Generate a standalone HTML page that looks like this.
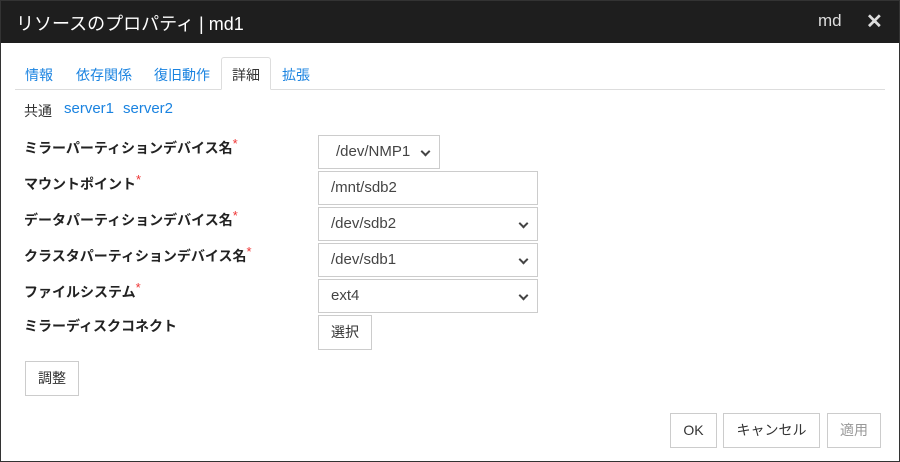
<!DOCTYPE html><html><head><meta charset="utf-8"><style>
*{box-sizing:border-box;margin:0;padding:0}
body{width:900px;height:462px;background:#fff;font-family:"Liberation Sans","Noto Sans CJK JP",sans-serif;font-size:14px;color:#333;position:relative;overflow:hidden}
.frame{position:absolute;inset:0;border:1px solid #333}
.title{position:absolute;left:0;top:0;width:900px;height:43px;background:#1e1e1e;color:#fff;font-size:18px}
.title .t{position:absolute;left:16px;top:10px}
.title .md{position:absolute;left:818px;top:11px;font-size:17px;color:#ddd}
.title .x{position:absolute;left:866px;top:9px;font-size:20px;font-weight:bold;color:#ddd}
.a{position:absolute;white-space:nowrap}
.tab{color:#1a83e0;top:65px}
.tabline{position:absolute;left:15px;top:89px;width:870px;height:1px;background:#ddd}
.act{position:absolute;left:221px;top:57px;width:50px;height:33px;border:1px solid #ddd;border-bottom:1px solid #fff;border-radius:3px 3px 0 0;background:#fff}
.lbl{left:24px;font-weight:bold;color:#222}
.lbl i{color:#e33;font-style:normal;font-size:13px;vertical-align:5px;font-weight:normal}
.box{position:absolute;border:1px solid #ccc;background:#fff;color:#444;padding-left:12px;line-height:31px;font-size:15px}
.box.s:after{content:"";position:absolute;right:10px;top:12px;width:5px;height:5px;border-right:2px solid #444;border-bottom:2px solid #444;transform:rotate(45deg)}
.btn{position:absolute;border:1px solid #ccc;background:#fff;text-align:center;line-height:32px;color:#333}
</style></head><body>
<div class="title"><span class="t">リソースのプロパティ | md1</span><span class="md">md</span><span class="x">✕</span></div>
<div class="tabline"></div><div class="act"></div>
<span class="a tab" style="left:25px">情報</span>
<span class="a tab" style="left:76px">依存関係</span>
<span class="a tab" style="left:154px">復旧動作</span>
<span class="a tab" style="left:232px;color:#333">詳細</span>
<span class="a tab" style="left:282px">拡張</span>
<span class="a" style="left:24px;top:101px">共通</span>
<span class="a" style="left:64px;top:100px;color:#1a83e0;font-size:15px">server1</span>
<span class="a" style="left:123px;top:100px;color:#1a83e0;font-size:15px">server2</span>
<span class="a lbl" style="top:136px">ミラーパーティションデバイス名<i>*</i></span>
<span class="a lbl" style="top:172px">マウントポイント<i>*</i></span>
<span class="a lbl" style="top:208px">データパーティションデバイス名<i>*</i></span>
<span class="a lbl" style="top:244px">クラスタパーティションデバイス名<i>*</i></span>
<span class="a lbl" style="top:280px">ファイルシステム<i>*</i></span>
<span class="a lbl" style="top:316px">ミラーディスクコネクト</span>
<div class="box s" style="left:318px;top:135px;width:122px;height:34px;padding-left:17px">/dev/NMP1</div>
<div class="box" style="left:318px;top:171px;width:220px;height:34px">/mnt/sdb2</div>
<div class="box s" style="left:318px;top:207px;width:220px;height:34px">/dev/sdb2</div>
<div class="box s" style="left:318px;top:243px;width:220px;height:34px">/dev/sdb1</div>
<div class="box s" style="left:318px;top:279px;width:220px;height:34px">ext4</div>
<div class="btn" style="left:318px;top:315px;width:54px;height:35px">選択</div>
<div class="btn" style="left:25px;top:361px;width:54px;height:35px">調整</div>
<div class="btn" style="left:670px;top:413px;width:47px;height:35px">OK</div>
<div class="btn" style="left:723px;top:413px;width:97px;height:35px">キャンセル</div>
<div class="btn" style="left:827px;top:413px;width:54px;height:35px;color:#999">適用</div>
<div class="frame"></div>
</body></html>
